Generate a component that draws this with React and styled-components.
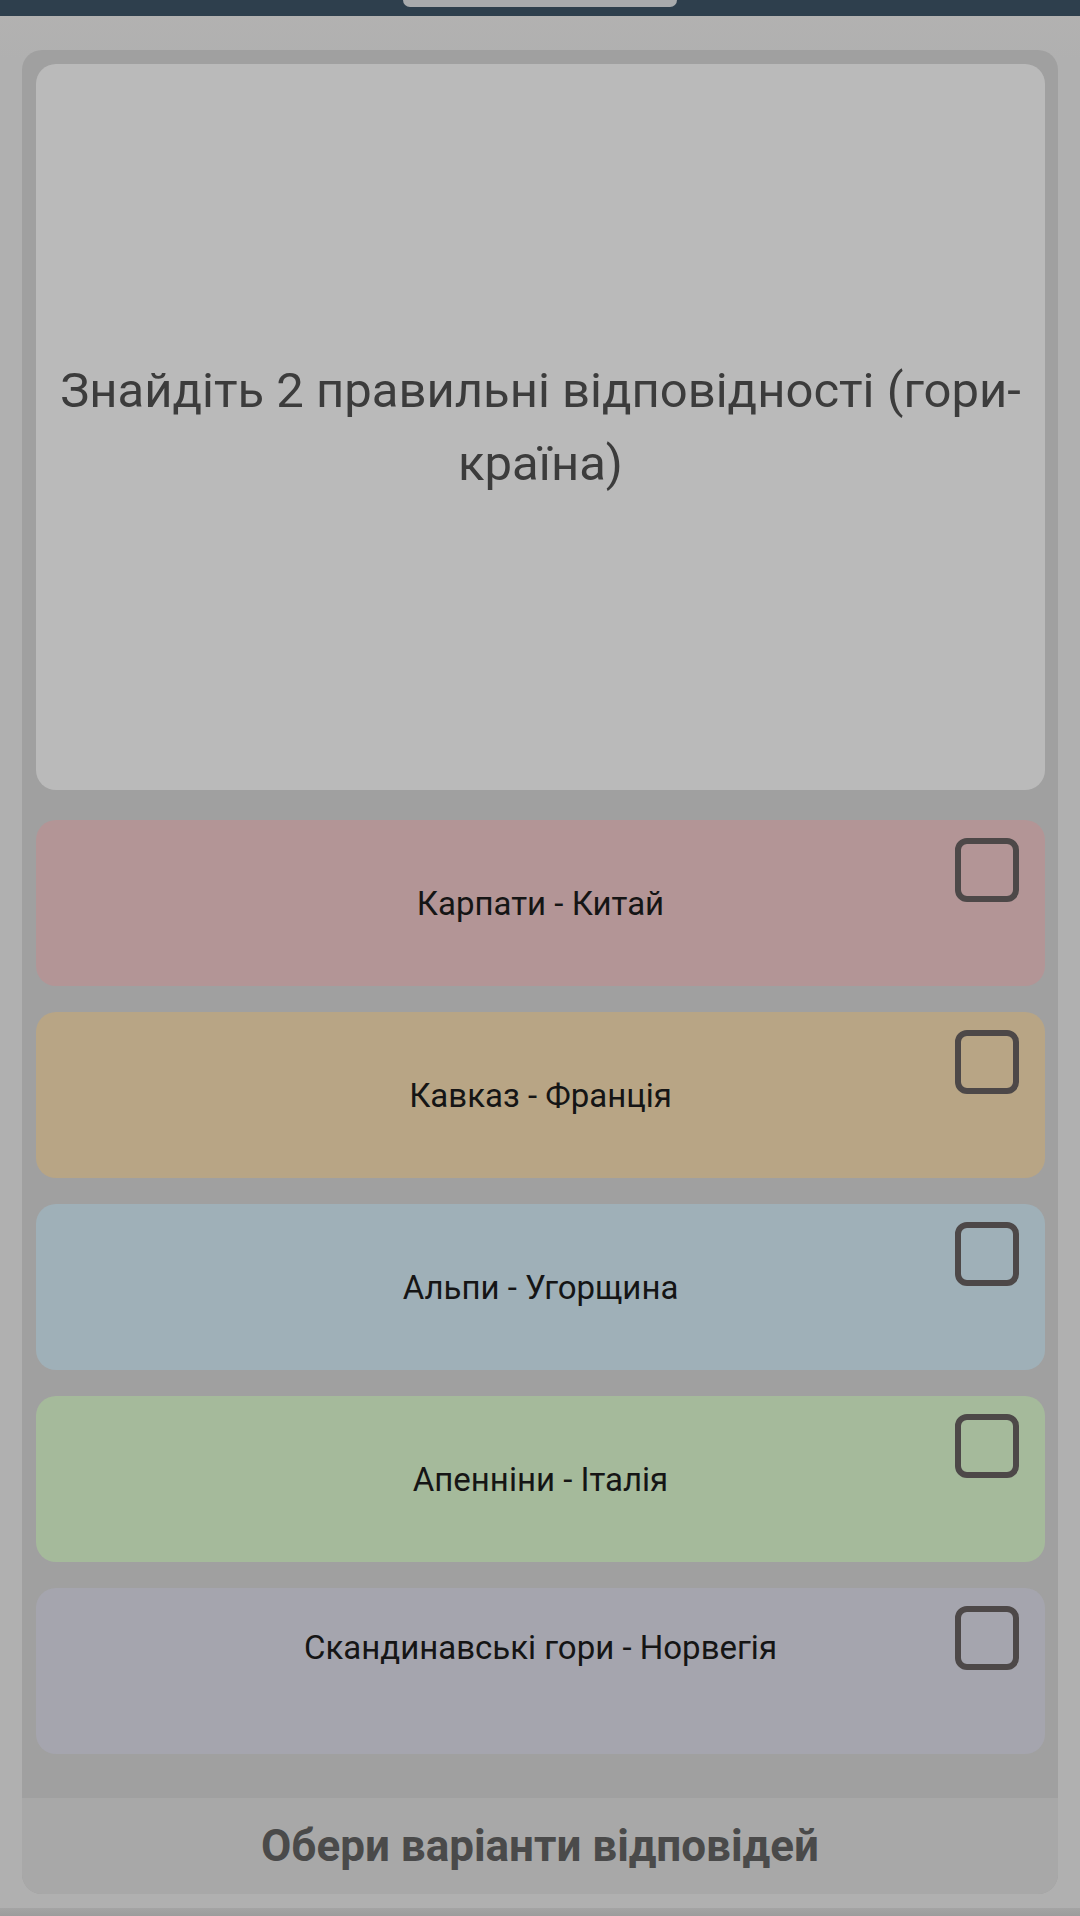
import React from 'react'
import styled, { createGlobalStyle } from 'styled-components'

const Global = createGlobalStyle`
  html, body {
    margin: 0;
    padding: 0;
    background: #b0b0b0;
    font-family: Roboto, "Noto Sans", sans-serif;
  }
`

const Screen = styled.div`
  width: 1080px;
  min-height: 1916px;
  display: flex;
  flex-direction: column;
  background: linear-gradient(#b3b2b1 0px, #b0b0b0 60px);
`

const TopBar = styled.div`
  height: 16px;
  background: #2e3f4d;
  display: flex;
  justify-content: center;
`

const Handle = styled.div`
  width: 274px;
  height: 7px;
  background: #a9abad;
  border-radius: 0 0 9px 9px;
`

const Panel = styled.div`
  margin: 34px 22px 0;
  background: #a0a0a0;
  border-radius: 20px;
  overflow: hidden;
  display: flex;
  flex-direction: column;
`

const Body = styled.div`
  padding: 14px 13px 44px 14px;
  display: flex;
  flex-direction: column;
  gap: 26px;
`

const Question = styled.div`
  height: 726px;
  background: #bababa;
  border-radius: 20px;
  display: flex;
  align-items: center;
  justify-content: center;
  padding: 0 8px;
  box-sizing: border-box;
  margin-bottom: 4px;
  font-size: 49px;
  line-height: 73px;
  color: #3c3c3c;
  text-align: center;
`

const Option = styled.div`
  height: 166px;
  background: ${p => p.bg};
  border-radius: 20px;
  display: grid;
  grid-template-columns: 100px 1fr 100px;
`

const OptionText = styled.div`
  grid-column: 2;
  align-self: center;
  text-align: center;
  font-size: 33px;
  color: #151515;
  padding-bottom: ${p => (p.raised ? '48px' : '0')};
`

const Check = styled.div`
  grid-column: 3;
  justify-self: end;
  align-self: start;
  margin: 18px 26px 0 0;
  width: 64px;
  height: 64px;
  box-sizing: border-box;
  border: 6px solid #4d4848;
  border-radius: 12px;
`

const Footer = styled.div`
  height: 96px;
  background: #a8a8a8;
  display: flex;
  align-items: center;
  justify-content: center;
  font-size: 44px;
  font-weight: 700;
  color: #4a4a4a;
`

const BottomEdge = styled.div`
  margin-top: auto;
  height: 8px;
  background: linear-gradient(#a4a4a4, #9c9c9c);
`

const options = [
  { text: 'Карпати - Китай', bg: '#b39596' },
  { text: 'Кавказ - Франція', bg: '#b8a585' },
  { text: 'Альпи - Угорщина', bg: '#9fb0b8' },
  { text: 'Апенніни - Італія', bg: '#a5ba9b' },
  { text: 'Скандинавські гори - Норвегія', bg: '#a5a5ae', raised: true },
]

const App = () => {
  return (
    <Screen>
      <Global />
      <TopBar>
        <Handle />
      </TopBar>
      <Panel>
        <Body>
          <Question>Знайдіть 2 правильні відповідності (гори-країна)</Question>
          {options.map(o => (
            <Option key={o.text} bg={o.bg}>
              <OptionText raised={o.raised}>{o.text}</OptionText>
              <Check />
            </Option>
          ))}
        </Body>
        <Footer>Обери варіанти відповідей</Footer>
      </Panel>
      <BottomEdge />
    </Screen>
  )
}

export default App
